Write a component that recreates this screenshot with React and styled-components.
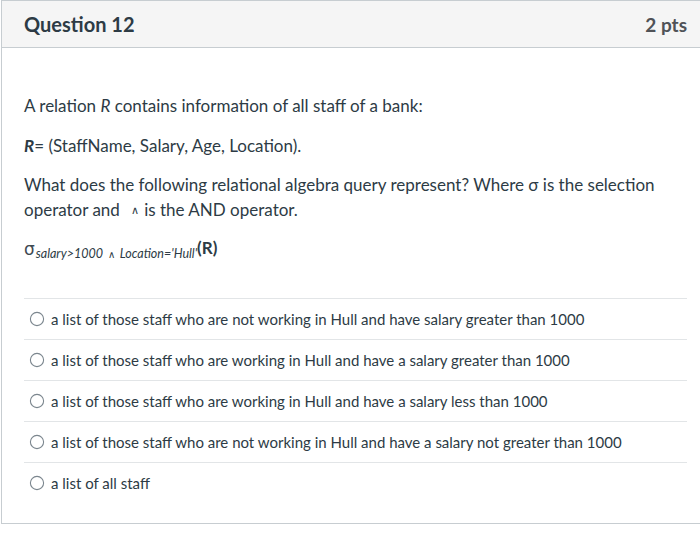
import React from "react";
import styled, { createGlobalStyle } from "styled-components";

const GlobalStyle = createGlobalStyle`
  body {
    margin: 0;
    background: #ffffff;
    overflow: hidden;
    font-family: Lato, "Open Sans", sans-serif;
    color: #2d3b45;
  }
`;

const answers = [
  "a list of those staff who are not working in Hull and have salary greater than 1000",
  "a list of those staff who are working in Hull and have a salary greater than 1000",
  "a list of those staff who are working in Hull and have a salary less than 1000",
  "a list of those staff who are not working in Hull and have a salary not greater than 1000",
  "a list of all staff",
];

function Radio() {
  return (
    <RadioIcon viewBox="0 0 16 16" width="16" height="16">
      <circle cx="8" cy="8" r="6.6" fill="#fff" stroke="#7b868e" strokeWidth="1.1" />
    </RadioIcon>
  );
}

export default function App() {
  return (
    <>
      <GlobalStyle />
      <Card>
        <Header>
          <Title>Question 12</Title>
          <Points>2 pts</Points>
        </Header>
        <Body>
          <Para>
            A relation <em>R</em> contains information of all staff of a bank:
          </Para>
          <Para>
            <strong>
              <em>R</em>
            </strong>
            = (StaffName, Salary, Age, Location).
          </Para>
          <Para>
            What does the following relational algebra query represent? Where σ is
            the selection operator and <Wedge>∧</Wedge>is the AND operator.
          </Para>
          <Formula>
            <Sigma>σ</Sigma>
            <Sub>
              salary&gt;1000 <SubWedge>∧</SubWedge> Location='Hull'
            </Sub>
            <Arg>(R)</Arg>
          </Formula>
          <AnswerList>
            {answers.map((a, i) => (
              <Answer key={i} $last={i === answers.length - 1}>
                <Radio />
                <AnswerText>{a}</AnswerText>
              </Answer>
            ))}
          </AnswerList>
        </Body>
      </Card>
    </>
  );
}

const Card = styled.div`
  width: 699px;
  margin-left: 1px;
  border: 1px solid #c7cdd1;
  border-right: none;
  box-sizing: border-box;
  background: #fff;
`;

const Header = styled.div`
  height: 47px;
  background: #f5f5f5;
  border-bottom: 1px solid #c7cdd1;
  display: flex;
  align-items: center;
  justify-content: space-between;
  padding: 0 13px 0 22px;
  box-sizing: border-box;
`;

const Title = styled.div`
  font-size: 20px;
  font-weight: 700;
  color: #2d3b45;
`;

const Points = styled.div`
  font-size: 19px;
  font-weight: 700;
  color: #4f5257;
`;

const Body = styled.div`
  padding: 45px 12px 20px 22px;
`;

const Para = styled.p`
  margin: 0 0 14.5px;
  font-size: 17px;
  line-height: 25px;
  color: #2d3b45;

  strong {
    font-weight: 700;
  }
`;

const Wedge = styled.span`
  display: inline-block;
  font-size: 11px;
  margin: 0 5px 0 7px;
  vertical-align: 2px;
`;

const Formula = styled.div`
  font-size: 17px;
  line-height: 25px;
  margin: -2px 0 31px;
  white-space: nowrap;
`;

const Sigma = styled.span`
  font-family: "DejaVu Sans", sans-serif;
  font-size: 17px;
  color: #3f4a52;
  margin-right: 1px;
`;

const Sub = styled.span`
  font-size: 12.5px;
  font-style: italic;
  vertical-align: -3px;
`;

const SubWedge = styled.span`
  font-style: normal;
  font-size: 10px;
  margin: 0 2px;
`;

const Arg = styled.span`
  font-weight: 700;
  font-size: 17px;
  vertical-align: 1px;
`;

const AnswerList = styled.div`
  width: 663px;
  border-top: 1px solid #e2e5e7;
`;

const Answer = styled.div`
  height: 40px;
  display: flex;
  align-items: center;
  gap: 6px;
  padding-left: 5px;
  border-bottom: ${(p) => (p.$last ? "none" : "1px solid #e2e5e7")};
`;

const RadioIcon = styled.svg`
  flex-shrink: 0;
`;

const AnswerText = styled.span`
  font-size: 15px;
  color: #2d3b45;
`;
